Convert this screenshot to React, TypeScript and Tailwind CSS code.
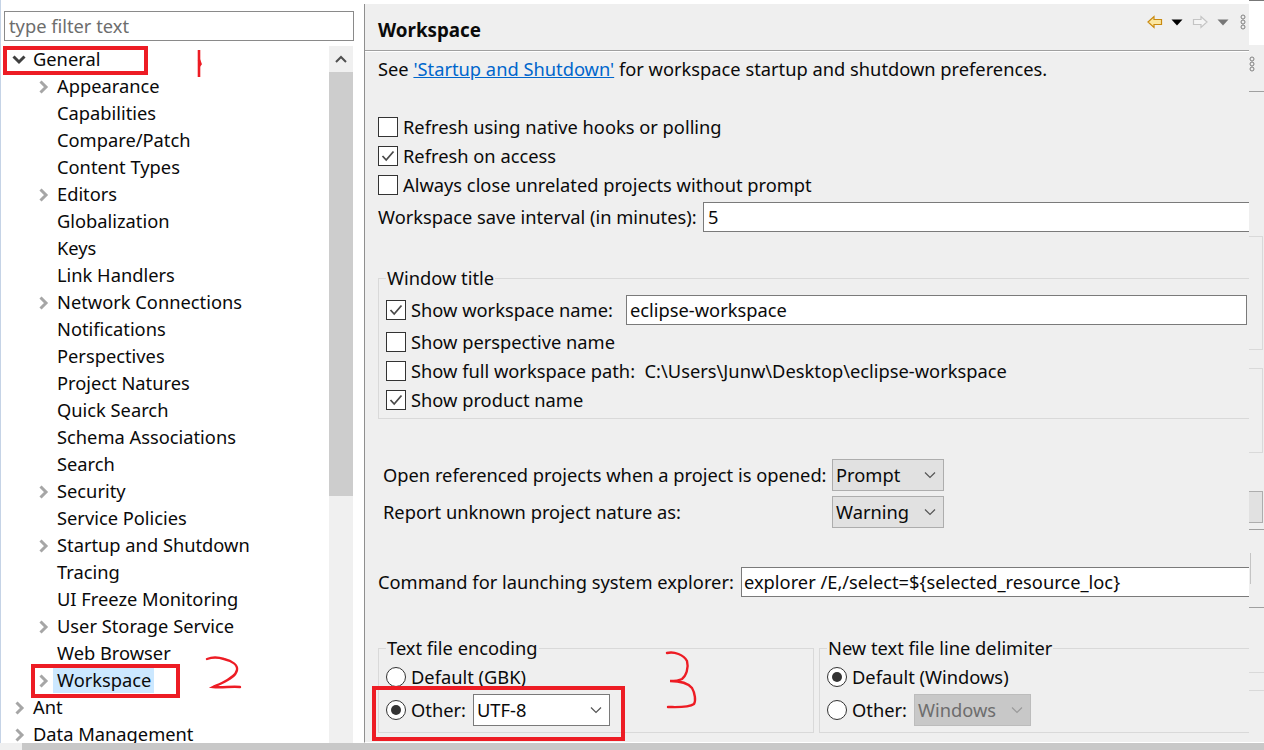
const treeItems: { label: string; indent: number; arrow?: 'right' | 'down'; selected?: boolean }[] = [
  { label: 'General', indent: 0, arrow: 'down' },
  { label: 'Appearance', indent: 1, arrow: 'right' },
  { label: 'Capabilities', indent: 1 },
  { label: 'Compare/Patch', indent: 1 },
  { label: 'Content Types', indent: 1 },
  { label: 'Editors', indent: 1, arrow: 'right' },
  { label: 'Globalization', indent: 1 },
  { label: 'Keys', indent: 1 },
  { label: 'Link Handlers', indent: 1 },
  { label: 'Network Connections', indent: 1, arrow: 'right' },
  { label: 'Notifications', indent: 1 },
  { label: 'Perspectives', indent: 1 },
  { label: 'Project Natures', indent: 1 },
  { label: 'Quick Search', indent: 1 },
  { label: 'Schema Associations', indent: 1 },
  { label: 'Search', indent: 1 },
  { label: 'Security', indent: 1, arrow: 'right' },
  { label: 'Service Policies', indent: 1 },
  { label: 'Startup and Shutdown', indent: 1, arrow: 'right' },
  { label: 'Tracing', indent: 1 },
  { label: 'UI Freeze Monitoring', indent: 1 },
  { label: 'User Storage Service', indent: 1, arrow: 'right' },
  { label: 'Web Browser', indent: 1 },
  { label: 'Workspace', indent: 1, arrow: 'right', selected: true },
  { label: 'Ant', indent: 0, arrow: 'right' },
  { label: 'Data Management', indent: 0, arrow: 'right' },
]

function TreeRow({ item }: { item: (typeof treeItems)[number] }) {
  return (
    <div className={item.indent ? 'flex h-[27px] shrink-0 items-center pl-[34px]' : 'flex h-[27px] shrink-0 items-center pl-[10px]'}>
      <span className="flex w-[18px] shrink-0 justify-center">
        {item.arrow === 'right' && (
          <svg width="12" height="14" viewBox="0 0 12 14" fill="none" stroke="#a6a6a6" strokeWidth="3">
            <path d="M2.5 1.5 L8 7 L2.5 12.5" />
          </svg>
        )}
        {item.arrow === 'down' && (
          <svg className="mr-[2px]" width="14" height="12" viewBox="0 0 14 12" fill="none" stroke="#404040" strokeWidth="3">
            <path d="M1.5 2.5 L7 8 L12.5 2.5" />
          </svg>
        )}
      </span>
      <span className={item.selected ? 'mb-[2px] bg-[#cce8ff] pl-[4px] pr-[3px] leading-[27px]' : 'mb-[2px] ml-[4px] leading-[27px]'}>
        {item.label}
      </span>
    </div>
  )
}

function Check({ checked }: { checked?: boolean }) {
  return (
    <span className="flex h-[20px] w-[20px] shrink-0 items-center justify-center border border-[#333333] bg-white">
      {checked && (
        <svg width="14" height="12" viewBox="0 0 14 12" fill="none" stroke="#4a4a4a" strokeWidth="1.8">
          <path d="M1.5 6 L5.2 10 L12.5 1.5" />
        </svg>
      )}
    </span>
  )
}

function Radio({ checked }: { checked?: boolean }) {
  return (
    <span className="flex h-[20px] w-[20px] shrink-0 items-center justify-center rounded-full border border-[#333333] bg-white">
      {checked && <span className="h-[10px] w-[10px] rounded-full bg-[#333333]" />}
    </span>
  )
}

function Chevron({ color = '#555555' }: { color?: string }) {
  return (
    <svg width="12" height="8" viewBox="0 0 12 8" fill="none" stroke={color} strokeWidth="1.2">
      <path d="M1 1.5 L6 6.5 L11 1.5" />
    </svg>
  )
}

function Combo({ value, width, tone = 'gray' }: { value: string; width: string; tone?: 'gray' | 'white' | 'disabled' }) {
  const toneClass =
    tone === 'white'
      ? 'border-[#7a7a7a] bg-white'
      : tone === 'disabled'
        ? 'border-[#bcbcbc] bg-[#c8c8c8] text-[#6d6d6d]'
        : 'border-[#adadad] bg-[#e1e1e1]'
  return (
    <div className={`flex h-[32px] shrink-0 items-center justify-between border pl-[3px] pr-[7px] ${width} ${toneClass}`}>
      <span>{value}</span>
      <Chevron color={tone === 'disabled' ? '#9a9a9a' : '#555555'} />
    </div>
  )
}

function Handwriting() {
  return (
    <>
      <svg className="absolute left-[190px] top-[46px]" width="20" height="34" viewBox="0 0 20 34" fill="none" stroke="#ed1c24" strokeWidth="2.6">
        <path d="M9 4 L9 31" />
        <path d="M9 14 L10.5 18 L9 20" />
      </svg>
      <svg className="absolute left-[200px] top-[650px]" width="50" height="44" viewBox="0 0 50 44" fill="none" stroke="#ed1c24" strokeWidth="2.4" strokeLinecap="round">
        <path d="M7 9 C12 7 18 7 24 9 C32 11 38 15 37 20 C36 26 28 30 22 33 C18 35 15 36 13 37 C22 38 32 36 40 37" />
      </svg>
      <svg className="absolute left-[660px] top-[646px]" width="44" height="68" viewBox="0 0 44 68" fill="none" stroke="#ed1c24" strokeWidth="2.4" strokeLinecap="round">
        <path d="M7 7 C14 5 24 9 27 15 C29 22 26 30 22 33 C18 35 12 35 10 35 C18 35 28 37 32 42 C35 47 36 55 34 58 C28 62 16 61 8 61" />
      </svg>
    </>
  )
}

export default function App() {
  return (
    <div className="relative flex h-[750px] w-[1264px] flex-col overflow-hidden bg-white font-['Noto_Sans','Open_Sans',sans-serif] text-[18.3px] text-[#0a0a0a]">
      <div className="flex min-h-0 flex-1">
        {/* preference tree */}
        <div className="flex h-full w-[353px] shrink-0 flex-col border-l border-[#c5d3e6] pl-[3px]">
          <div className="mt-[11px] flex h-[30px] w-[350px] shrink-0 items-center border border-[#8a8a8a] pl-[4px] text-[#6d6d6d]">
            type filter text
          </div>
          <div className="mt-[5px] flex min-h-0 flex-1">
            <div className="min-w-0 flex-1 overflow-hidden -ml-[3px]">
              <div className="flex flex-col whitespace-nowrap">
                {treeItems.map((item) => (
                  <TreeRow key={item.label} item={item} />
                ))}
              </div>
            </div>
            <div className="flex w-[24px] shrink-0 flex-col bg-[#f0f0f0]">
              <div className="flex h-[26px] items-center justify-center">
                <svg width="12" height="8" viewBox="0 0 12 8" fill="none" stroke="#505050" strokeWidth="2">
                  <path d="M1 7 L6 2 L11 7" />
                </svg>
              </div>
              <div className="h-[424px] bg-[#cdcdcd]" />
            </div>
          </div>
        </div>

        {/* sash */}
        <div className="w-[11px] shrink-0" />

        {/* preference page */}
        <div className="flex h-full w-[885px] shrink-0 flex-col overflow-hidden">
          <div className="h-[4px] shrink-0 bg-white" />
          <div className="flex min-h-0 flex-1 flex-col border-l border-b border-l-[#8f8f8f] border-b-white bg-[#efefef]">
            <div className="flex h-[47px] shrink-0 items-start justify-between border-b border-[#a0a0a0] pl-[13px] pr-[3px]">
              <span className="mt-[12px] text-[18.8px] font-bold leading-[28px]">Workspace</span>
              <div className="mt-[10px] flex items-center">
                <svg width="16" height="14" viewBox="0 0 16 14" fill="#fbe6a0" stroke="#c98a10" strokeWidth="1.2">
                  <path d="M1 7 L7 1.5 V4.5 H14.5 V9.5 H7 V12.5 Z" />
                </svg>
                <svg className="ml-[8px]" width="12" height="7" viewBox="0 0 12 7" fill="#000000">
                  <path d="M0.5 0.5 H11.5 L6 6.5 Z" />
                </svg>
                <svg className="ml-[9px]" width="16" height="14" viewBox="0 0 16 14" fill="#f5f5f5" stroke="#c4c4c4" strokeWidth="1.2">
                  <path d="M15 7 L9 1.5 V4.5 H1.5 V9.5 H9 V12.5 Z" />
                </svg>
                <svg className="ml-[9px]" width="12" height="7" viewBox="0 0 12 7" fill="#777777">
                  <path d="M0.5 0.5 H11.5 L6 6.5 Z" />
                </svg>
                <svg className="ml-[11px]" width="6" height="16" viewBox="0 0 6 16" fill="none" stroke="#808080" strokeWidth="1">
                  <circle cx="3" cy="3" r="2" />
                  <circle cx="3" cy="8" r="2" />
                  <circle cx="3" cy="13" r="2" />
                </svg>
              </div>
            </div>
            <div className="h-[1px] shrink-0 bg-white" />

            <div className="flex min-h-0 flex-1 flex-col overflow-hidden pl-[13px]">
              <div className="mt-[2px] flex h-[30px] shrink-0 items-center whitespace-pre">
                See <span className="text-[#0066cc] underline">'Startup and Shutdown'</span> for workspace startup and shutdown preferences.
              </div>

              <div className="mb-[1px] mt-[29px] flex h-[28px] shrink-0 items-center gap-[5px]"><Check /> Refresh using native hooks or polling</div>
              <div className="mb-[1px] flex h-[28px] shrink-0 items-center gap-[5px]"><Check checked /> Refresh on access</div>
              <div className="mb-[1px] flex h-[28px] shrink-0 items-center gap-[5px]"><Check /> Always close unrelated projects without prompt</div>
              <div className="mt-[2px] flex h-[30px] shrink-0 items-center whitespace-nowrap">
                <span className="w-[325px] shrink-0">Workspace save interval (in minutes):</span>
                <div className="flex h-[30px] w-[600px] shrink-0 items-center border border-[#7a7a7a] bg-white pl-[4px]">5</div>
              </div>

              {/* window title group */}
              <div className="relative mt-[46px] h-[141px] w-[872px] shrink-0 border-t border-l border-b border-[#d9d9d9] pl-[7px]">
                <span className="absolute left-[7px] top-[-15px] bg-[#efefef] px-[1px] leading-[27px]">Window title</span>
                <div className="mt-[16px] flex h-[30px] items-center gap-[5px] whitespace-nowrap">
                  <Check checked /> <span className="w-[210px]">Show workspace name:</span>
                  <div className="flex h-[30px] w-[621px] shrink-0 items-center border border-[#7a7a7a] bg-white pl-[3px]">eclipse-workspace</div>
                </div>
                <div className="mb-[1px] mt-[3px] flex h-[28px] items-center gap-[5px]"><Check /> Show perspective name</div>
                <div className="mb-[1px] flex h-[28px] items-center gap-[5px] whitespace-nowrap"><Check /> Show full workspace path:&nbsp; C:\Users\Junw\Desktop\eclipse-workspace</div>
                <div className="flex h-[28px] items-center gap-[5px]"><Check checked /> Show product name</div>
              </div>

              <div className="mt-[40px] flex h-[32px] shrink-0 items-center pl-[5px] whitespace-nowrap">
                <span className="w-[449px] shrink-0">Open referenced projects when a project is opened:</span>
                <Combo value="Prompt" width="w-[112px]" />
              </div>
              <div className="mt-[5px] flex h-[32px] shrink-0 items-center pl-[5px] whitespace-nowrap">
                <span className="w-[449px] shrink-0">Report unknown project nature as:</span>
                <Combo value="Warning" width="w-[112px]" />
              </div>

              <div className="mt-[39px] flex h-[30px] shrink-0 items-center whitespace-nowrap">
                <span className="w-[363px] shrink-0">Command for launching system explorer:</span>
                <div className="flex h-[30px] w-[520px] shrink-0 items-center border border-[#7a7a7a] bg-white pl-[2px]">explorer /E,/select=${'{'}selected_resource_loc{'}'}</div>
              </div>

              <div className="mt-[51px] flex shrink-0 gap-[5px]">
                <div className="relative h-[85px] w-[436px] shrink-0 border border-[#d9d9d9] pl-[7px]">
                  <span className="absolute left-[7px] top-[-15px] bg-[#efefef] px-[1px] leading-[27px]">Text file encoding</span>
                  <div className="mt-[18px] flex h-[20px] items-center gap-[5px]"><Radio /> Default (GBK)</div>
                  <div className="mt-[13px] flex h-[20px] items-center gap-[5px] whitespace-nowrap">
                    <Radio checked /> <span className="w-[57px]">Other:</span>
                    <Combo value="UTF-8" width="w-[137px]" tone="white" />
                  </div>
                </div>
                <div className="relative h-[85px] w-[445px] shrink-0 border border-[#d9d9d9] pl-[7px]">
                  <span className="absolute left-[7px] top-[-15px] bg-[#efefef] px-[1px] leading-[27px]">New text file line delimiter</span>
                  <div className="mt-[18px] flex h-[20px] items-center gap-[5px]"><Radio checked /> Default (Windows)</div>
                  <div className="mt-[13px] flex h-[20px] items-center gap-[5px] whitespace-nowrap">
                    <Radio /> <span className="w-[57px]">Other:</span>
                    <Combo value="Windows" width="w-[117px]" tone="disabled" />
                  </div>
                </div>
              </div>
            </div>
          </div>
        </div>

        {/* leftover strip on the right edge */}
        <div className="flex h-full w-[15px] shrink-0 flex-col border-b border-white bg-[#efefef]">
          <div className="h-[45px] shrink-0 border-t border-[#777777] bg-white" />
          <div className="mt-[11px] w-[6px]">
            <svg width="6" height="16" viewBox="0 0 6 16" fill="none" stroke="#808080" strokeWidth="1">
              <circle cx="3" cy="3" r="2" />
              <circle cx="3" cy="8" r="2" />
              <circle cx="3" cy="13" r="2" />
            </svg>
          </div>
          <div className="mt-[19px] h-[1px] shrink-0 bg-[#a0a0a0]" />
          <div className="mt-[144px] h-[114px] w-[14px] shrink-0 border-t border-r border-b border-[#d9d9d9]" />
          <div className="mt-[18px] h-[85px] w-[14px] shrink-0 border-t border-r border-b border-[#d9d9d9]" />
          <div className="mt-[38px] h-[32px] w-[14px] shrink-0 border-t border-r border-b border-[#adadad] bg-[#e1e1e1]" />
          <div className="mt-[6px] h-[1px] shrink-0 bg-[#a0a0a0]" />
          <div className="mt-[23px] h-[31px] w-[2px] shrink-0 border-r border-[#c4c4c4]" />
          <div className="mt-[23px] h-[1px] shrink-0 bg-[#a0a0a0]" />
          <div className="mt-[64px] h-[1px] shrink-0 bg-[#d9d9d9]" />
          <div className="mt-[17px] h-[1px] shrink-0 bg-[#d9d9d9]" />
        </div>
      </div>

      {/* bottom scrollbar */}
      <div className="h-[7px] shrink-0 bg-[#f0f0f0] pl-[22px]">
        <div className="h-full bg-[#c8c8c8]" />
      </div>

      {/* red markup drawn on top of the screenshot */}
      <div className="absolute left-[3px] top-[46px] h-[29px] w-[145px] border-[4.5px] border-[#ed1c24]" />
      <div className="absolute left-[31px] top-[664px] h-[34px] w-[149px] border-[4.5px] border-[#ed1c24]" />
      <div className="absolute left-[372px] top-[686px] h-[55px] w-[253px] border-[4.5px] border-[#ed1c24]" />
      <Handwriting />
    </div>
  )
}
